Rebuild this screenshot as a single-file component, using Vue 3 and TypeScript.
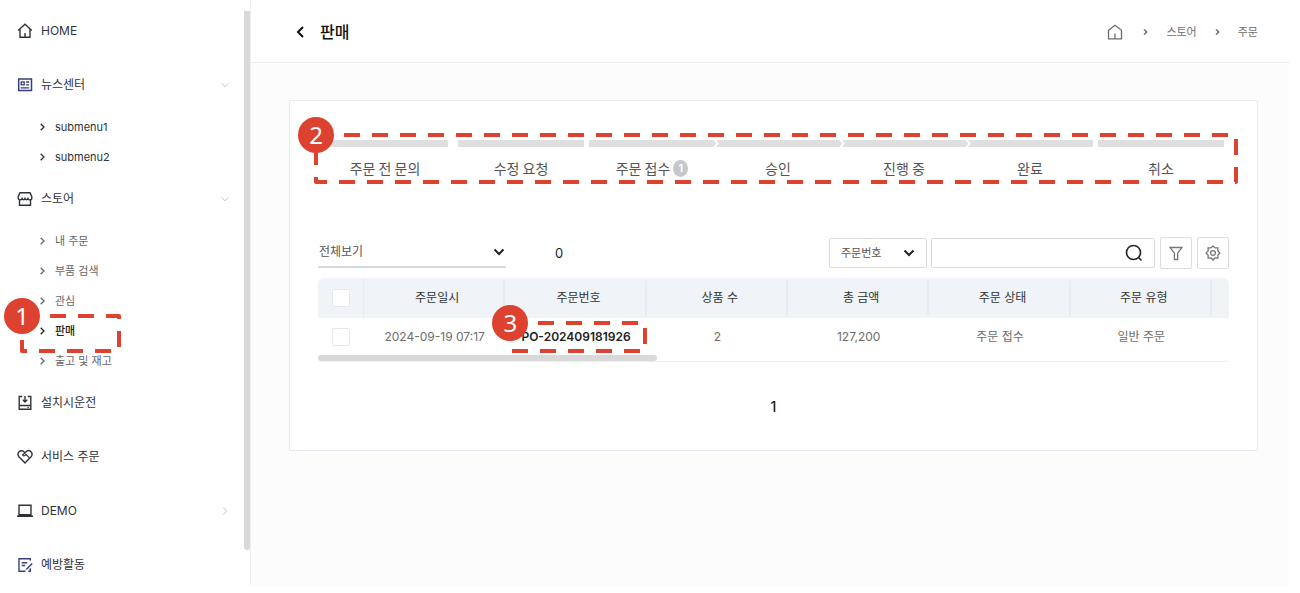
<script setup lang="ts">
import { ref } from 'vue'

type IconName = 'home' | 'news' | 'store' | 'install' | 'service' | 'demo' | 'activity'

interface SubItem {
  label: string
  tone?: 'dark' | 'current'
  callout?: number
}

interface MenuItem {
  label: string
  icon: IconName
  arrow?: 'down' | 'right'
  children?: SubItem[]
}

interface Step {
  label: string
  count?: number
  join: 'wide' | 'narrow' | 'arrow' | 'end'
}

const menu: MenuItem[] = [
  { label: 'HOME', icon: 'home' },
  {
    label: '뉴스센터',
    icon: 'news',
    arrow: 'down',
    children: [
      { label: 'submenu1', tone: 'dark' },
      { label: 'submenu2', tone: 'dark' },
    ],
  },
  {
    label: '스토어',
    icon: 'store',
    arrow: 'down',
    children: [
      { label: '내 주문' },
      { label: '부품 검색' },
      { label: '관심' },
      { label: '판매', tone: 'current', callout: 1 },
      { label: '출고 및 재고' },
    ],
  },
  { label: '설치시운전', icon: 'install' },
  { label: '서비스 주문', icon: 'service' },
  { label: 'DEMO', icon: 'demo', arrow: 'right' },
  { label: '예방활동', icon: 'activity' },
]

const steps: Step[] = [
  { label: '주문 전 문의', join: 'wide' },
  { label: '수정 요청', join: 'narrow' },
  { label: '주문 접수', count: 1, join: 'arrow' },
  { label: '승인', join: 'arrow' },
  { label: '진행 중', join: 'arrow' },
  { label: '완료', join: 'narrow' },
  { label: '취소', join: 'end' },
]

const headers = ['주문일시', '주문번호', '상품 수', '총 금액', '주문 상태', '주문 유형']
const orders = [
  { date: '2024-09-19 07:17', no: 'PO-202409181926', qty: 2, total: '127,200', status: '주문 접수', type: '일반 주문' },
]

const view = ref('전체보기')
const field = ref('주문번호')
const keyword = ref('')
</script>

<template>
  <div class="app">
    <aside class="sidebar">
      <nav class="menu" aria-label="메뉴">
        <ul>
          <li v-for="item in menu" :key="item.label">
            <a class="menu-item" href="#">
              <svg class="menu-icon" viewBox="0 0 16 16" aria-hidden="true">
                <template v-if="item.icon === 'home'">
                  <path d="M1.200 7.400 8 1.200l6.800 6.200M3 6v8.300h10V6M8 14.300V10" />
                </template>
                <g v-else-if="item.icon === 'news'" class="navy">
                  <rect x="1.700" y="2" width="12.800" height="11.500" stroke-width="1.500" />
                  <rect x="4.200" y="5" width="3" height="2.800" stroke-width="1.300" />
                  <path d="M9 5h3M9 7.800h3M3.600 10.800h8.600" stroke-width="1.300" />
                </g>
                <template v-else-if="item.icon === 'store'">
                  <path d="M3 1.700h10l1.800 4v1.200c0 1.300-.9 2-1.900 2-1.100 0-1.700-.6-2-1.400-.4.800-1 1.200-1.500 1.200S8.300 8.300 8 7.500c-.3.800-.9 1.200-1.400 1.200S5.500 8.300 5.100 7.500c-.3.800-.9 1.400-2 1.400-1 0-1.900-.7-1.900-2V5.700zM2.500 9v5.300h11V9" />
                </template>
                <template v-else-if="item.icon === 'install'">
                  <path d="M5.200 1.500H2.200v12.700h11.600V1.500h-3M2.200 10.500h11.600M8 1v5.500M5.800 4.800 8 7l2.200-2.200" />
                  <path d="M10.500 12.400h1.300" stroke-width="1.200" />
                </template>
                <template v-else-if="item.icon === 'service'">
                  <path d="M8 13.900 1.900 7.700C.5 6.200.6 4 2 2.700c1.500-1.400 3.900-1.200 5.200.2L8 3.700l.8-.8c1.400-1.400 3.700-1.600 5.200-.2 1.400 1.300 1.500 3.500.1 5z" />
                  <path d="M8.200 3.600 5.600 6c.4 1 1.500 1.100 2.300.4L9 5.600l3.500 3.300" stroke-width="1.200" />
                </template>
                <template v-else-if="item.icon === 'demo'">
                  <path d="M2 2.200h12v9.600H2zM0 13.200h16" />
                </template>
                <g v-else class="navy">
                  <path d="M13.300 3.500V1.800H2v12.400h6.500M4.700 5.700h5.600M4.700 8.500h3.500" />
                  <path d="M13.300 11.200v3h-2M9.200 12.600l6-6.200" />
                </g>
              </svg>
              <span class="menu-label">{{ item.label }}</span>
              <svg v-if="item.arrow" class="menu-arrow" viewBox="0 0 8 8" aria-hidden="true">
                <path :d="item.arrow === 'down' ? 'M.5 2.200 4 5.800l3.500-3.600' : 'M2.200.5 5.800 4 2.200 7.500'" />
              </svg>
            </a>
            <ul v-if="item.children">
              <li v-for="sub in item.children" :key="sub.label" class="sub-row">
                <a class="sub-item" :class="sub.tone" href="#">
                  <svg viewBox="0 0 5 8" aria-hidden="true"><path d="M.7.8 4 4 .7 7.200" /></svg>
                  {{ sub.label }}
                </a>
                <div v-if="sub.callout" class="callout callout-menu">
                  <svg aria-hidden="true"><rect width="100%" height="100%" /></svg>
                  <span>{{ sub.callout }}</span>
                </div>
              </li>
            </ul>
          </li>
        </ul>
      </nav>
      <div class="side-scroll"></div>
    </aside>

    <main class="main">
      <header class="topbar">
        <button class="back" type="button" aria-label="뒤로">
          <svg viewBox="0 0 8 12" aria-hidden="true"><path d="M7 1 2 6l5 5" /></svg>
        </button>
        <h1>판매</h1>
        <nav class="crumbs" aria-label="경로">
          <a class="crumb-root" href="#" aria-label="홈">
            <svg class="crumb-home" viewBox="0 0 16 16" aria-hidden="true">
              <path d="M1.500 6.200 8 1.200l6.500 5v8.600h-13zM8 14.800V9.500" />
            </svg>
          </a>
          <svg class="crumb-sep" viewBox="0 0 5 8" aria-hidden="true"><path d="M1 1.500 3.700 4 1 6.500" /></svg>
          <a href="#">스토어</a>
          <svg class="crumb-sep" viewBox="0 0 5 8" aria-hidden="true"><path d="M1 1.500 3.700 4 1 6.500" /></svg>
          <a href="#">주문</a>
        </nav>
      </header>

      <section class="card">
        <div class="steps-wrap">
          <ol class="steps">
            <li v-for="step in steps" :key="step.label" :class="step.join">
              <div class="bar">
                <svg v-if="step.join === 'arrow'" viewBox="0 0 8 7" aria-hidden="true"><path d="M2 -1 5.500 3.500 2 8" /></svg>
              </div>
              <div class="step-label">
                {{ step.label }}<span v-if="step.count" class="count">{{ step.count }}</span>
              </div>
            </li>
          </ol>
          <div class="callout callout-steps">
            <svg aria-hidden="true"><rect width="100%" height="100%" /></svg>
            <span>2</span>
          </div>
        </div>

        <form class="toolbar" @submit.prevent>
          <div class="select view">
            <select v-model="view" aria-label="보기"><option>전체보기</option></select>
            <svg viewBox="0 0 12 8" aria-hidden="true"><path d="m1.500 1.500 4.500 4.500 4.500-4.500" /></svg>
          </div>
          <output class="total">0</output>
          <div class="select field">
            <select v-model="field" aria-label="검색 조건"><option>주문번호</option></select>
            <svg viewBox="0 0 12 8" aria-hidden="true"><path d="m1.500 1.500 4.500 4.500 4.500-4.500" /></svg>
          </div>
          <div class="search">
            <input v-model="keyword" type="text" aria-label="검색어" />
            <button type="submit" aria-label="검색">
              <svg viewBox="0 0 18 18" aria-hidden="true"><circle cx="8.500" cy="8.500" r="7" /><path d="m13.500 13.500 3 3" /></svg>
            </button>
          </div>
          <button class="tool" type="button" aria-label="필터">
            <svg viewBox="0 0 16 16" aria-hidden="true"><path d="M2 2.500h12l-4.300 5.700v6.300H6.400V8.200z" /></svg>
          </button>
          <button class="tool" type="button" aria-label="설정">
            <svg viewBox="0 0 16 16" aria-hidden="true">
              <path d="m8 1 2.100 1.900 2.800-.1-.1 2.900L14.900 8l-2.100 2.200.1 2.900-2.800-.1L8 15l-2.100-2-2.800.1.100-2.900L1.100 8l2.100-2.300-.1-2.900 2.800.1z" />
              <circle cx="8" cy="8" r="2.400" />
            </svg>
          </button>
        </form>

        <table class="grid">
          <colgroup>
            <col class="col-check" />
            <col v-for="h in headers" :key="h" />
            <col class="col-tail" />
          </colgroup>
          <thead>
            <tr>
              <th class="check thin"><input type="checkbox" aria-label="전체 선택" /></th>
              <th v-for="h in headers" :key="h" class="title" scope="col">{{ h }}</th>
              <td class="tail"></td>
            </tr>
          </thead>
          <tbody>
            <tr v-for="o in orders" :key="o.no">
              <td class="check"><input type="checkbox" :aria-label="o.no" /></td>
              <td>{{ o.date }}</td>
              <td class="order-no">
                <a href="#">{{ o.no }}</a>
                <div class="callout callout-order">
                  <svg aria-hidden="true"><rect width="100%" height="100%" /></svg>
                  <span>3</span>
                </div>
              </td>
              <td>{{ o.qty }}</td>
              <td>{{ o.total }}</td>
              <td>{{ o.status }}</td>
              <td>{{ o.type }}</td>
              <td></td>
            </tr>
          </tbody>
        </table>
        <div class="grid-scroll"><div></div></div>

        <nav class="pages" aria-label="페이지"><a href="#" aria-current="page">1</a></nav>
      </section>
    </main>
  </div>
</template>

<style>
body {
  background: #fff;
}
</style>

<style scoped>
.app {
  display: flex;
  align-items: flex-start;
  padding-right: 11px;
  font-family: Inter, "Noto Sans CJK KR", sans-serif;
  font-size: 12px;
  line-height: 20px;
  color: #333;
}
.app * {
  box-sizing: border-box;
}
a {
  color: inherit;
  text-decoration: none;
}
ul,
ol {
  margin: 0;
  padding: 0;
  list-style: none;
}
svg {
  display: block;
  flex: none;
  fill: none;
  stroke: currentColor;
}
button {
  display: flex;
  align-items: center;
  justify-content: center;
  padding: 0;
  border: 0;
  background: none;
  color: inherit;
}

/* sidebar */
.sidebar {
  display: flex;
  flex: none;
  align-items: flex-start;
  width: 250px;
}
.menu {
  flex: 1;
  padding-top: 4px;
}
.menu-item {
  display: flex;
  align-items: center;
  gap: 8px;
  height: 54px;
  padding: 0 15px 0 17px;
  color: #2f3237;
}
.menu-icon {
  width: 16px;
  height: 16px;
  stroke-width: 1.4;
}
.navy {
  color: #353f7c;
  stroke: #353f7c;
}
.menu-label {
  flex: 1;
}
.menu-arrow {
  width: 8px;
  height: 8px;
  color: #c4c4c4;
}
.sub-row {
  position: relative;
}
.sub-item {
  display: flex;
  align-items: center;
  gap: 10px;
  height: 30px;
  padding-left: 40px;
  font-size: 11px;
  color: #666;
}
.sub-item svg {
  width: 5px;
  height: 8px;
  stroke-width: 1.3;
}
.sub-item.dark {
  color: #2f3237;
}
.sub-item.current {
  font-weight: 500;
  color: #222;
}
.side-scroll {
  width: 6px;
  height: calc(100vh - 54px);
  margin-top: 11px;
  border-radius: 0 0 3px 3px;
  background: #d9d9d9;
}

/* page */
.main {
  flex: 1;
  min-width: 0;
  min-height: calc(100vh - 8px);
  border-left: 1px solid #eee;
  background: #fcfcfc;
}
.topbar {
  display: flex;
  align-items: center;
  height: 63px;
  padding: 2px 31px 0 45px;
  border-bottom: 1px solid #eee;
  background: #fff;
}
.back svg {
  width: 8px;
  height: 12px;
  stroke-width: 2;
}
.back {
  color: #111;
}
h1 {
  margin: 0 0 0 16px;
  font-size: 16px;
  font-weight: 500;
  line-height: 24px;
  color: #111;
}
.crumbs {
  display: flex;
  align-items: center;
  gap: 18px;
  margin-left: auto;
  font-size: 11px;
  color: #6d6d6d;
}
.crumb-root {
  margin-right: 2px;
}
.crumb-home {
  width: 16px;
  height: 16px;
  stroke-width: 1.3;
}
.crumb-sep {
  width: 5px;
  height: 8px;
  stroke-width: 1.5;
}
.card {
  margin: 37px 31px 32px 38px;
  padding: 39px 28px 33px;
  border: 1px solid #e7eaf0;
  border-radius: 2px;
  background: #fff;
}

/* order steps */
.steps-wrap {
  position: relative;
}
.steps {
  display: flex;
  padding: 0 5px 0 4px;
}
.steps li {
  flex: 1;
}
.steps .wide {
  margin-right: 10px;
}
.steps .narrow {
  margin-right: 5px;
}
.bar {
  position: relative;
  height: 7px;
  background: #dedfe1;
}
.bar svg {
  position: absolute;
  z-index: 1;
  top: 0;
  right: -5px;
  width: 8px;
  height: 7px;
  color: #fff;
  stroke-width: 2;
}
.step-label {
  display: flex;
  align-items: center;
  justify-content: center;
  margin-top: 11px;
  font-family: "Noto Sans CJK KR", sans-serif;
  font-size: 14px;
  color: #555;
}
.count {
  width: 15px;
  height: 17px;
  margin-left: 3px;
  border-radius: 50%;
  background: #c4c8ca;
  color: #fff;
  font-family: Inter, sans-serif;
  font-size: 11px;
  font-weight: 600;
  line-height: 17px;
  text-align: center;
}

/* toolbar */
.toolbar {
  display: flex;
  align-items: center;
  height: 32px;
  margin-top: 59px;
}
.select {
  display: flex;
  align-items: center;
  height: 30px;
}
.select select {
  width: 100%;
  height: 100%;
  padding: 0;
  border: 0;
  outline: 0;
  appearance: none;
  background: none;
  font: inherit;
  color: #555;
}
.select svg {
  width: 12px;
  height: 8px;
  margin-left: -12px;
  stroke-width: 2;
  color: #222;
  pointer-events: none;
}
.view {
  width: 188px;
  padding: 0 1px;
  border-bottom: 2px solid #d5d8df;
}
.total {
  width: 20px;
  margin-left: 43px;
  font-size: 13px;
  color: #222;
  text-align: center;
}
.field {
  width: 98px;
  margin-left: auto;
  padding: 0 11px;
  border: 1px solid #d9dbe1;
  border-radius: 2px;
  font-size: 11px;
}
.search {
  display: flex;
  width: 224px;
  height: 30px;
  margin-left: 4px;
  border: 1px solid #d9dbe1;
  border-radius: 2px;
}
.search input {
  flex: 1;
  min-width: 0;
  padding: 0 10px;
  border: 0;
  outline: 0;
  background: none;
  font: inherit;
}
.search button {
  width: 40px;
  color: #222;
}
.search svg {
  width: 18px;
  height: 18px;
  stroke-width: 1.6;
}
.tool {
  width: 32px;
  height: 32px;
  margin-left: 5px;
  border: 1px solid #dcdde1;
  border-radius: 2px;
  color: #777;
}
.tool svg {
  width: 16px;
  height: 16px;
  stroke-width: 1.3;
}

/* order table */
.grid {
  width: 100%;
  margin-top: 9px;
  border-spacing: 0;
  table-layout: fixed;
}
.col-check {
  width: 46px;
}
.col-tail {
  width: 17px;
}
.grid th,
.grid td {
  padding: 0;
  text-align: center;
}
.grid thead th,
.grid thead td {
  height: 40px;
  background: #f0f4f8;
  font-weight: 400;
  color: #333;
}
.grid thead th {
  background: linear-gradient(#e6ecf2, #e6ecf2) right center / 2px 34px no-repeat #f0f4f8;
}
.grid thead .thin {
  background-size: 1px 40px;
  border-top-left-radius: 6px;
}
.grid thead .title {
  padding-left: 5px;
}
.grid thead .tail {
  border-top-right-radius: 6px;
}
.grid tbody td {
  height: 37px;
  color: #6d6d6d;
}
.check input {
  display: block;
  width: 18px;
  height: 18px;
  margin: 0 auto;
  border: 1px solid #e6e8ef;
  border-radius: 2px;
  appearance: none;
  background: #fff;
}
.grid tbody .order-no {
  position: relative;
  font-weight: 600;
  color: #222;
}
.grid-scroll {
  border-bottom: 1px solid #eceef1;
  border-radius: 0 0 4px 4px;
}
.grid-scroll div {
  width: 37.2%;
  height: 6px;
  border-radius: 3px;
  background: #d9d9d9;
}
.pages {
  margin-top: 35px;
  font-size: 14px;
  font-weight: 500;
  color: #222;
  text-align: center;
}

/* numbered callouts laid over the page */
.callout {
  position: absolute;
  z-index: 2;
  pointer-events: none;
}
.callout svg {
  width: 100%;
  height: 100%;
  overflow: visible;
  color: #dd4230;
  stroke-width: 4;
  stroke-dasharray: 16 12;
  stroke-linejoin: round;
}
.callout span {
  position: absolute;
  top: -18px;
  left: -18px;
  width: 36px;
  height: 36px;
  border-radius: 50%;
  background: #dd4230;
  color: #fff;
  font-family: "Noto Sans", sans-serif;
  font-size: 24px;
  font-weight: 400;
  line-height: 36px;
  text-align: center;
}
.callout-menu {
  top: 0;
  left: 22px;
  width: 97px;
  height: 35px;
}
.callout-steps {
  top: -5px;
  right: -7px;
  left: -2px;
  height: 47px;
}
.callout-order {
  top: 5px;
  left: 5px;
  width: 135px;
  height: 28px;
}
</style>
